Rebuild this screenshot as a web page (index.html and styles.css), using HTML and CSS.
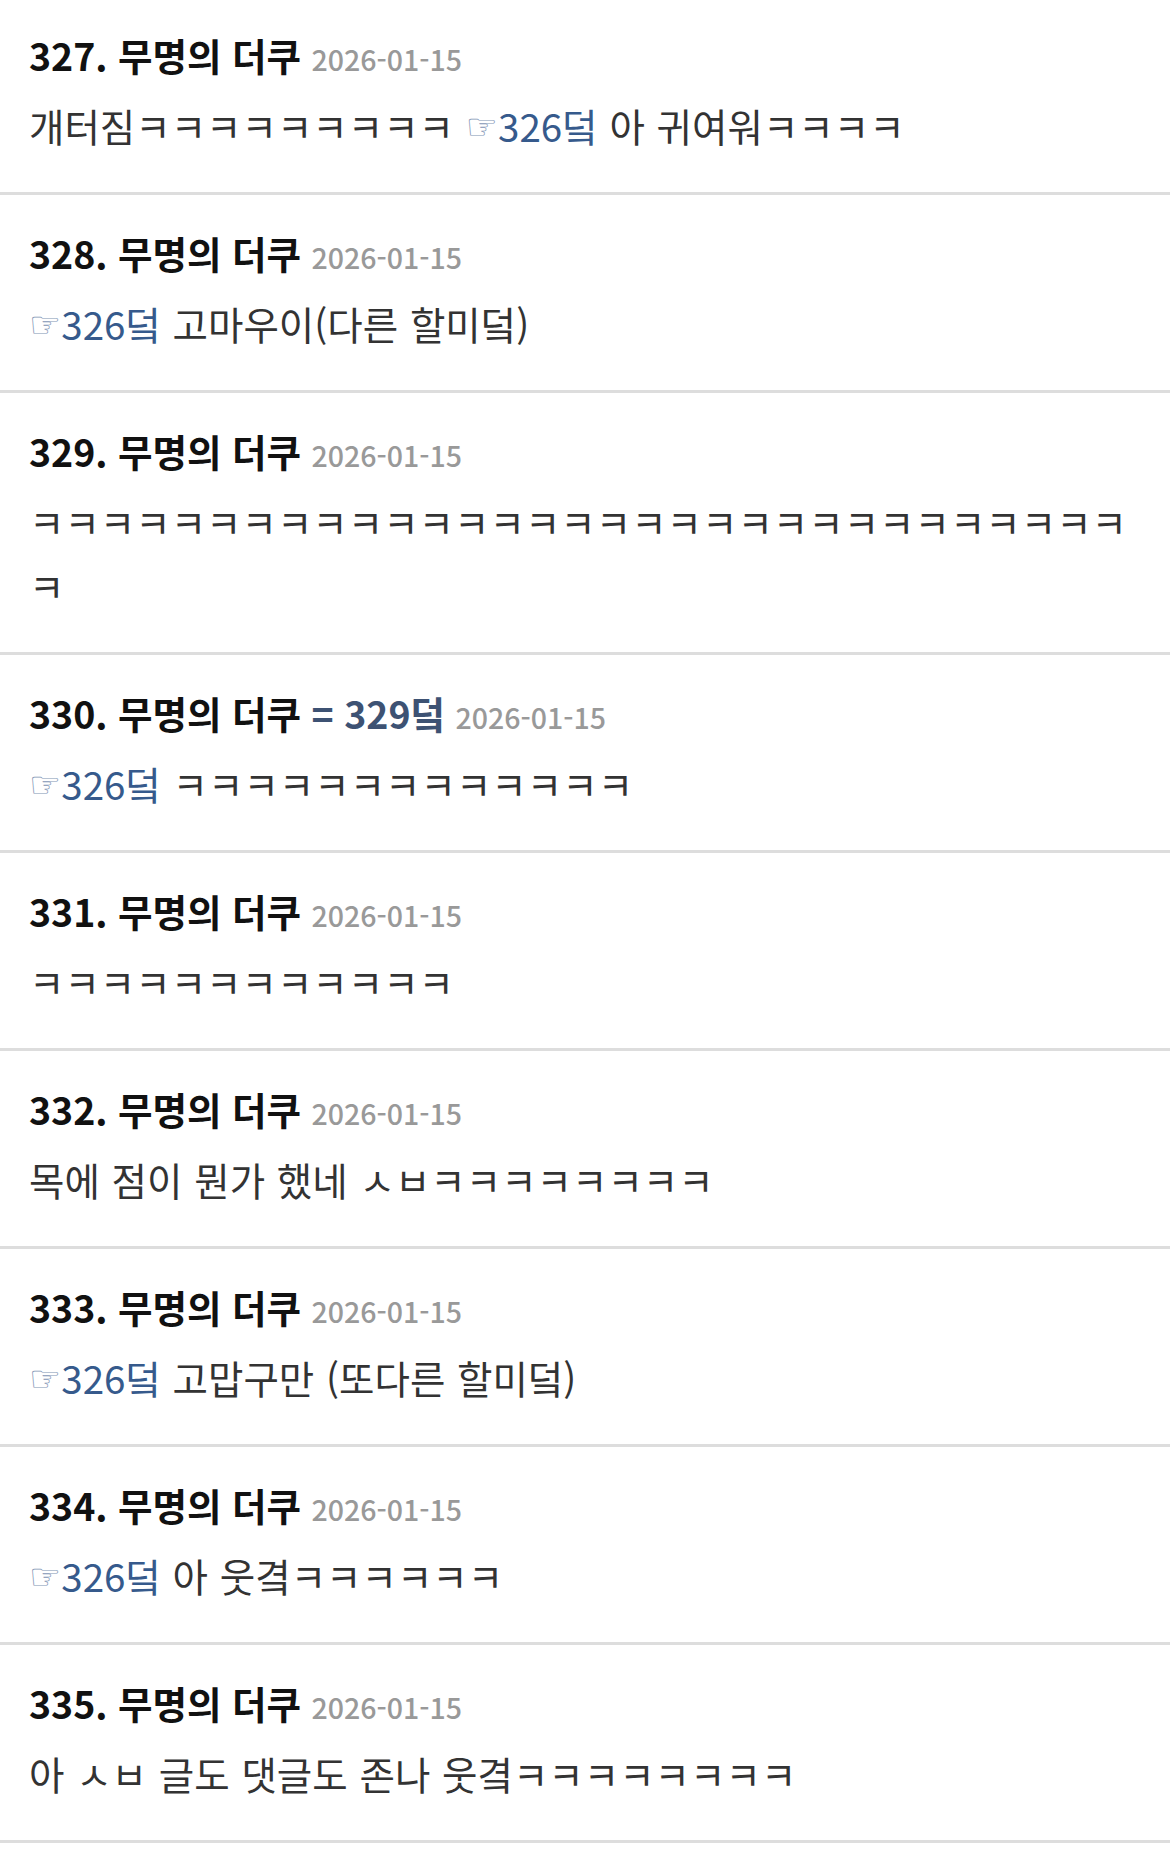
FILE: index.html
```html
<!DOCTYPE html>
<html lang="ko">
<head>
    <meta charset="UTF-8">
    <meta name="viewport" content="width=device-width, initial-scale=1.0">
    <title>댓글</title>
    <link rel="stylesheet" href="styles.css">
</head>
<body>
    <div class="comments">
        <div class="comment">
            <div class="comment-head">327. 무명의 더쿠 <span class="date">2026-01-15</span></div>
            <div class="comment-body">개터짐ㅋㅋㅋㅋㅋㅋㅋㅋㅋ <span class="hand">☞</span><a class="ref">326덬</a> 아 귀여워ㅋㅋㅋㅋ</div>
        </div>
        <div class="comment">
            <div class="comment-head">328. 무명의 더쿠 <span class="date">2026-01-15</span></div>
            <div class="comment-body"><span class="hand">☞</span><a class="ref">326덬</a> 고마우이(다른 할미덬)</div>
        </div>
        <div class="comment">
            <div class="comment-head">329. 무명의 더쿠 <span class="date">2026-01-15</span></div>
            <div class="comment-body">ㅋㅋㅋㅋㅋㅋㅋㅋㅋㅋㅋㅋㅋㅋㅋㅋㅋㅋㅋㅋㅋㅋㅋㅋㅋㅋㅋㅋㅋㅋㅋㅋ</div>
        </div>
        <div class="comment">
            <div class="comment-head">330. 무명의 더쿠 <span class="same">= 329덬</span> <span class="date">2026-01-15</span></div>
            <div class="comment-body"><span class="hand">☞</span><a class="ref">326덬</a> ㅋㅋㅋㅋㅋㅋㅋㅋㅋㅋㅋㅋㅋ</div>
        </div>
        <div class="comment">
            <div class="comment-head">331. 무명의 더쿠 <span class="date">2026-01-15</span></div>
            <div class="comment-body">ㅋㅋㅋㅋㅋㅋㅋㅋㅋㅋㅋㅋ</div>
        </div>
        <div class="comment">
            <div class="comment-head">332. 무명의 더쿠 <span class="date">2026-01-15</span></div>
            <div class="comment-body">목에 점이 뭔가 했네 ㅅㅂㅋㅋㅋㅋㅋㅋㅋㅋ</div>
        </div>
        <div class="comment">
            <div class="comment-head">333. 무명의 더쿠 <span class="date">2026-01-15</span></div>
            <div class="comment-body"><span class="hand">☞</span><a class="ref">326덬</a> 고맙구만 (또다른 할미덬)</div>
        </div>
        <div class="comment">
            <div class="comment-head">334. 무명의 더쿠 <span class="date">2026-01-15</span></div>
            <div class="comment-body"><span class="hand">☞</span><a class="ref">326덬</a> 아 웃&#xACC0;ㅋㅋㅋㅋㅋㅋ</div>
        </div>
        <div class="comment">
            <div class="comment-head">335. 무명의 더쿠 <span class="date">2026-01-15</span></div>
            <div class="comment-body">아 ㅅㅂ 글도 댓글도 존나 웃&#xACC0;ㅋㅋㅋㅋㅋㅋㅋㅋ</div>
        </div>
    </div>
</body>
</html>
```

FILE: styles.css
```css
body {
    margin: 0;
    background: #fff;
    font-family: "Noto Sans CJK KR", "Noto Sans", sans-serif;
}
.comments {
    margin-top: -3px;
}
.comment {
    padding: 33px 36px 35px 29px;
    border-bottom: 3px solid #dddddd;
}
.comment-head {
    font-size: 37.5px;
    font-weight: bold;
    line-height: 50px;
    color: #111;
    white-space: nowrap;
}
.same {
    color: #3d5273;
}
.date {
    font-size: 28.5px;
    font-weight: 500;
    line-height: 1;
    color: #999;
}
.comment-body {
    margin-top: 13px;
    font-size: 38.5px;
    line-height: 64px;
    color: #333;
    word-spacing: 1px;
    word-break: break-all;
}
.ref {
    color: #365a8c;
    text-decoration: none;
}
.hand {
    font-family: "DejaVu Sans", sans-serif;
    font-size: 36px;
    line-height: 1;
    vertical-align: 3px;
    color: #7f95b5;
}
```
